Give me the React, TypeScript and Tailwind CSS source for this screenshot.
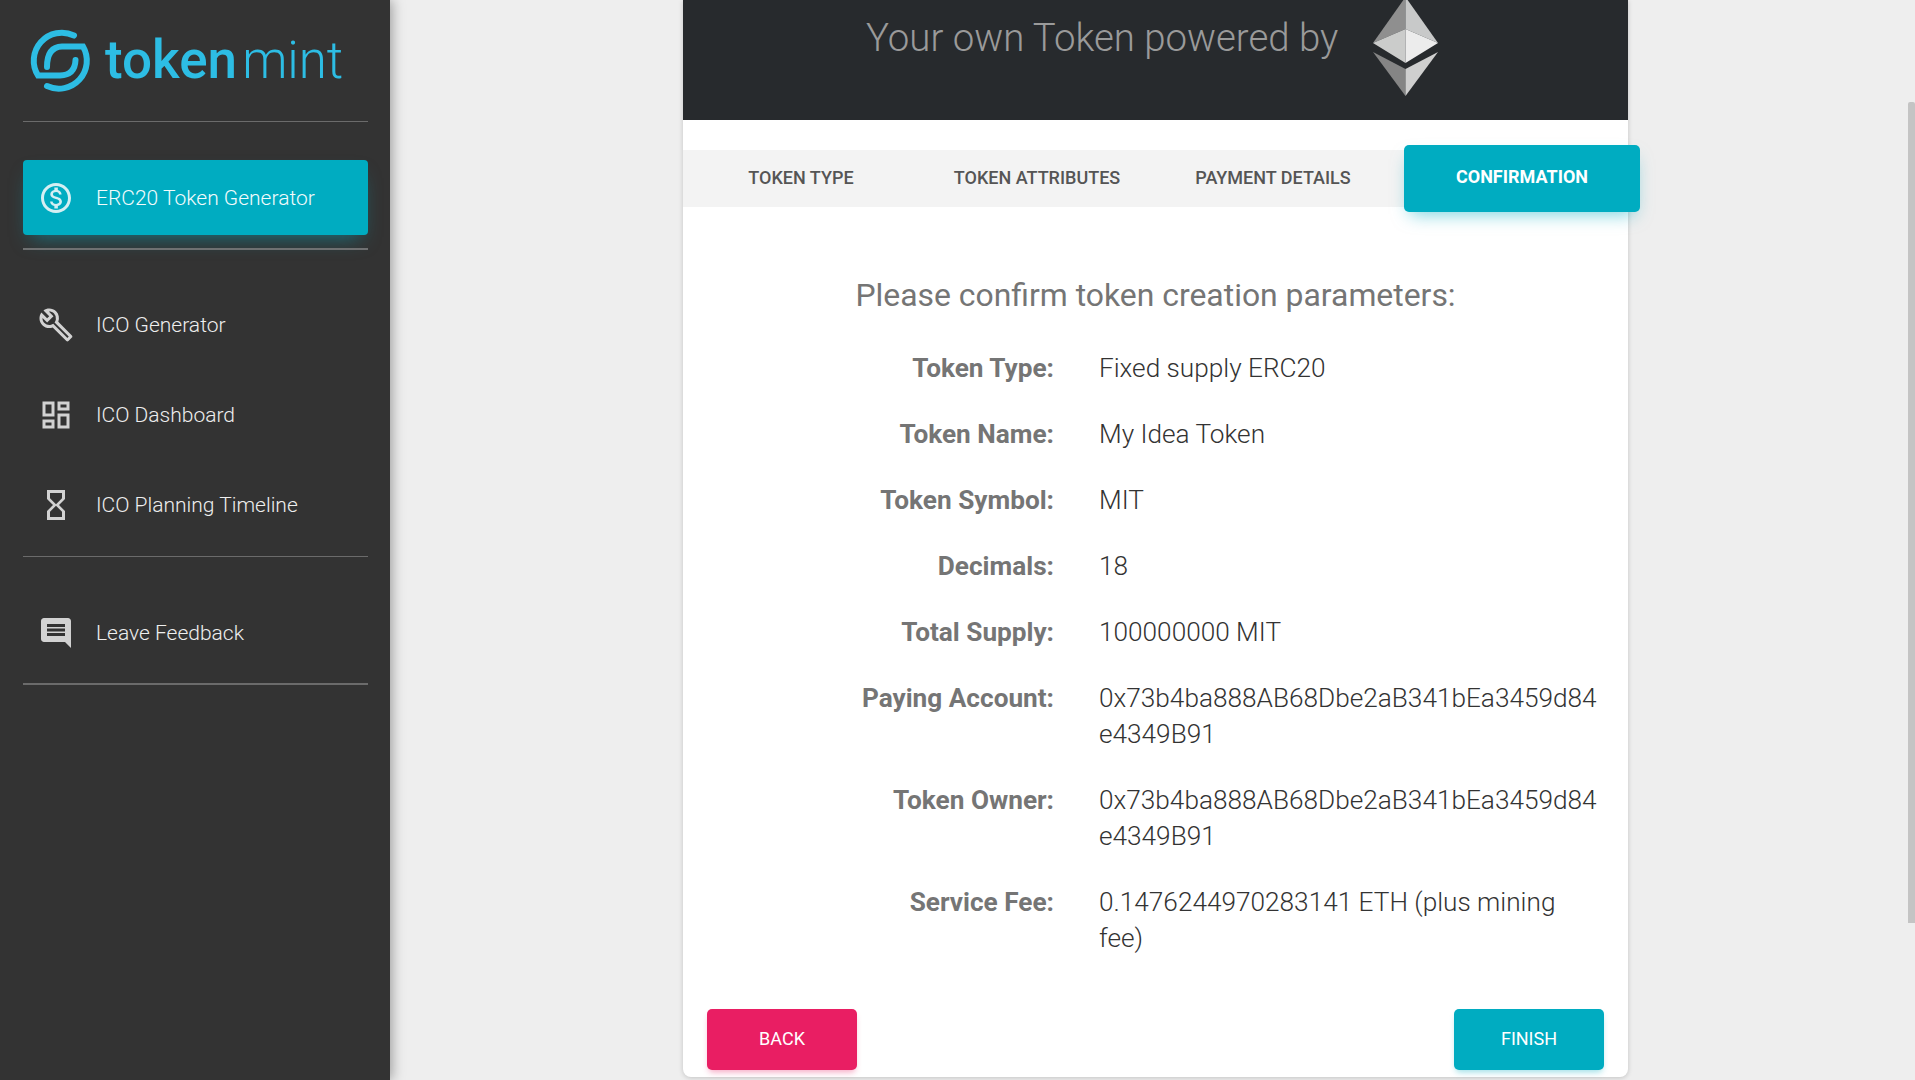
import {
  MdMessage,
  MdOutlineBuild,
  MdOutlineDashboard,
  MdOutlineHourglassEmpty,
  MdOutlineMonetizationOn,
} from "react-icons/md";

const rows = [
  ["Token Type:", "Fixed supply ERC20"],
  ["Token Name:", "My Idea Token"],
  ["Token Symbol:", "MIT"],
  ["Decimals:", "18"],
  ["Total Supply:", "100000000 MIT"],
  ["Paying Account:", "0x73b4ba888AB68Dbe2aB341bEa3459d84e4349B91"],
  ["Token Owner:", "0x73b4ba888AB68Dbe2aB341bEa3459d84e4349B91"],
  ["Service Fee:", "0.1476244970283141 ETH (plus mining fee)"],
];

const tabs = ["TOKEN TYPE", "TOKEN ATTRIBUTES", "PAYMENT DETAILS"];

function Logo() {
  return (
    <svg width="70" height="70" viewBox="26 26 70 70" fill="none" stroke="#2dbde4" strokeWidth="6" strokeLinecap="round" className="mt-[3px] shrink-0">
      <path d="M74 34.5 A28 28 0 0 0 38 74.5 H60 Q75 74 75.5 59" />
      <path d="M47 85 A28 28 0 0 0 83 45.5 H62 Q47 46 47 66" />
    </svg>
  );
}

function EthLogo() {
  return (
    <svg width="65" height="99" viewBox="0 0 65 99" className="ml-[35px] -mt-[3px] shrink-0">
      <polygon points="32.5,0 0,46 32.5,32" fill="#8f8f8f" />
      <polygon points="32.5,0 65,46 32.5,32" fill="#c8c9c9" />
      <polygon points="0,46 32.5,32 32.5,66" fill="#cbcccb" />
      <polygon points="65,46 32.5,32 32.5,66" fill="#ececec" />
      <polygon points="0,55 32.5,72 32.5,99" fill="#858585" />
      <polygon points="65,55 32.5,72 32.5,99" fill="#cfcfcf" />
    </svg>
  );
}

function NavItem({ icon, label }: { icon: React.ReactNode; label: string }) {
  return (
    <div className="flex h-[90px] items-center text-[#eeeeee]">
      <div className="mr-[7px] flex w-[66px] justify-center text-[#d2d2d2]">{icon}</div>
      <span className="pt-[2px]">{label}</span>
    </div>
  );
}

export default function App() {
  return (
    <div className="flex h-screen overflow-hidden bg-[#eeeeee] font-['Roboto',sans-serif]">
      <aside className="z-10 flex h-full w-[390px] shrink-0 flex-col bg-[#333333] pr-[22px] pl-[23px] text-[21px] font-light shadow-[2px_0_12px_rgba(0,0,0,0.35)]">
        <div className="flex h-[121px] items-center pb-[1px] pl-[3px]">
          <Logo />
          <div className="ml-[9px] flex items-baseline leading-none text-[#2dbde4]">
            <span className="text-[53px] font-medium">token</span>
            <span className="ml-[5px] text-[51px] font-light">mint</span>
          </div>
        </div>
        <div className="h-px bg-[#6b6b6b]" />
        <div className="mt-[38px] flex h-[75px] items-center rounded-[4px] bg-[#00acc1] text-[#f2fbfc] shadow-[0_10px_20px_-8px_rgba(0,172,193,0.55)]">
          <div className="mr-[7px] flex w-[66px] justify-center text-[#d5eff3]">
            <MdOutlineMonetizationOn size={36} />
          </div>
          <span className="pt-[2px]">ERC20 Token Generator</span>
        </div>
        <div className="mt-[13px] h-[2px] bg-[#6f7172]" />
        <div className="mt-[30px]">
          <NavItem icon={<MdOutlineBuild size={36} />} label="ICO Generator" />
          <NavItem icon={<MdOutlineDashboard size={36} />} label="ICO Dashboard" />
          <NavItem icon={<MdOutlineHourglassEmpty size={36} />} label="ICO Planning Timeline" />
        </div>
        <div className="mt-[6px] h-px bg-[#6b6b6b]" />
        <div className="mt-[31px]">
          <NavItem icon={<MdMessage size={36} className="-scale-x-100" />} label="Leave Feedback" />
        </div>
        <div className="mt-[5px] h-[2px] bg-[#6b6b6b]" />
      </aside>

      <main className="min-w-0 flex-1 pl-[293px]">
        <div className="h-[1077px] w-[945px] rounded-b-[8px] bg-white shadow-[0_1px_5px_rgba(0,0,0,0.18)]">
          <div className="flex h-[120px] items-start overflow-hidden bg-[#272a2d] pl-[183px]">
            <div className="mt-[16px] text-[38.4px] leading-[44px] font-light text-[#9a9a9a]">Your own Token powered by</div>
            <EthLogo />
          </div>

          <div className="mt-[30px] flex h-[57px] items-center bg-[#f3f3f3] text-[18px] font-medium text-[#555555]">
            {tabs.map((tab) => (
              <div key={tab} className="w-[236px] shrink-0 pb-[2px] text-center">
                {tab}
              </div>
            ))}
            <div className="z-10 ml-[13px] flex h-[67px] w-[236px] shrink-0 items-center justify-center rounded-[5px] bg-[#00acc1] pb-[4px] font-bold text-white shadow-[0_8px_18px_-6px_rgba(0,172,193,0.55)]">
              CONFIRMATION
            </div>
          </div>

          <h2 className="mt-[69px] text-center text-[31.9px] leading-[38px] font-normal text-[#757575]">
            Please confirm token creation parameters:
          </h2>

          <div className="mt-[36px] flex flex-col gap-[30px] text-[26.2px] leading-[36px]">
            {rows.map(([label, value]) => (
              <div key={label} className="flex">
                <div className="w-[371px] shrink-0 text-right font-bold text-[#757575]">{label}</div>
                <div className="ml-[45px] w-[504px] font-light wrap-break-word text-[#333333]">{value}</div>
              </div>
            ))}
          </div>

          <div className="mt-[53px] flex justify-between px-[24px]">
            <button className="h-[61px] w-[150px] rounded-[5px] bg-[#e91e63] pb-[2px] text-[18px] font-normal text-white shadow-[0_4px_6px_-2px_rgba(233,30,99,0.4)]">
              BACK
            </button>
            <button className="h-[61px] w-[150px] rounded-[5px] bg-[#00acc1] pb-[2px] text-[18px] font-normal text-white shadow-[0_4px_6px_-2px_rgba(0,172,193,0.4)]">
              FINISH
            </button>
          </div>
        </div>
      </main>

      <div className="w-[7px] shrink-0">
        <div className="mt-[102px] h-[821px] rounded-t-[2px] bg-[#c4c4c4]" />
      </div>
    </div>
  );
}
